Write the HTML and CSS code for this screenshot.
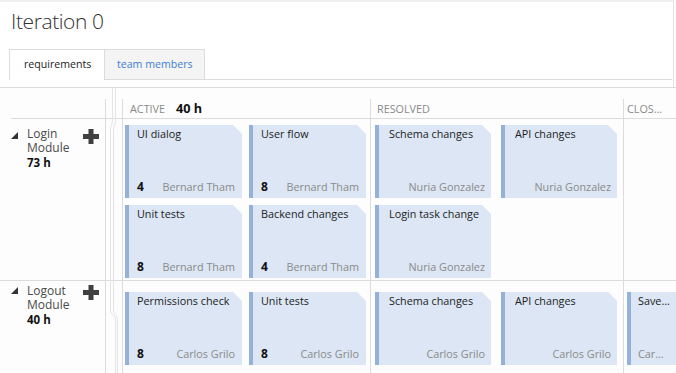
FILE: index.html
```html
<!DOCTYPE html>
<html lang="en">
<head>
<meta charset="utf-8">
<title>Iteration 0</title>
<link rel="stylesheet" href="styles.css">
</head>
<body>
<div class="top">
  <h1 class="title">Iteration 0</h1>
  <div class="tabs">
    <div class="tab tab-active">requirements</div>
    <div class="tab tab-link">team members</div>
    <div class="tab-fill"></div>
  </div>
</div>
<div class="board">
  <div class="hd hd-lane"></div>
  <svg class="splitter" width="18" height="285" viewBox="0 0 18 285">
    <path d="M0.5 11V285M17.5 11V285" stroke="#dcdcdc" fill="none"/>
    <path d="M0 30.5H18M0 192.5H18" stroke="#dcdcdc" fill="none"/>
    <path d="M7.5 0V32C7.5 37 5.5 37 5.5 42V222C5.5 228 10.5 226 10.5 232V285" stroke="#e4e4e4" fill="none"/>
    <path d="M10.5 0V32C10.5 37 8.5 37 8.5 42V222C8.5 228 12.5 226 12.5 232V285" stroke="#e4e4e4" fill="none"/>
  </svg>
  <div class="hd hd-active"><span class="hd-name">Active</span><span class="hd-count">40 h</span></div>
  <div class="hd hd-col hd-resolved"><span class="hd-name">Resolved</span></div>
  <div class="hd hd-col hd-closed"><span class="hd-name">Closed</span></div>

  <div class="lane lane-1">
    <svg class="tri" width="7" height="7" viewBox="0 0 7 7"><polygon points="7,0 7,7 0,7" fill="#333"/></svg>
    <div class="lane-title"><div class="lane-name">Login</div><div class="lane-name">Module</div><div class="lane-hours">73 h</div></div>
    <svg class="plus" width="16" height="15" viewBox="0 0 16 15"><path d="M5.5 0H10.5V5H16V10H10.5V15H5.5V10H0V5H5.5Z" fill="#404040"/></svg>
  </div>
  <div class="cell cell-active row-1">
    <div class="card"><div class="card-title">UI dialog</div><div class="card-foot"><span class="est">4</span><span class="owner">Bernard Tham</span></div></div>
    <div class="card"><div class="card-title">User flow</div><div class="card-foot"><span class="est">8</span><span class="owner">Bernard Tham</span></div></div>
    <div class="card"><div class="card-title">Unit tests</div><div class="card-foot"><span class="est">8</span><span class="owner">Bernard Tham</span></div></div>
    <div class="card"><div class="card-title">Backend changes</div><div class="card-foot"><span class="est">4</span><span class="owner">Bernard Tham</span></div></div>
  </div>
  <div class="cell cell-resolved row-1">
    <div class="card card-narrow"><div class="card-title">Schema changes</div><div class="card-foot"><span class="owner">Nuria Gonzalez</span></div></div>
    <div class="card card-narrow"><div class="card-title">API changes</div><div class="card-foot"><span class="owner">Nuria Gonzalez</span></div></div>
    <div class="card card-narrow"><div class="card-title">Login task change</div><div class="card-foot"><span class="owner">Nuria Gonzalez</span></div></div>
  </div>
  <div class="cell cell-closed row-1"></div>

  <div class="lane lane-2">
    <svg class="tri" width="7" height="7" viewBox="0 0 7 7"><polygon points="7,0 7,7 0,7" fill="#333"/></svg>
    <div class="lane-title"><div class="lane-name">Logout</div><div class="lane-name">Module</div><div class="lane-hours">40 h</div></div>
    <svg class="plus" width="16" height="15" viewBox="0 0 16 15"><path d="M5.5 0H10.5V5H16V10H10.5V15H5.5V10H0V5H5.5Z" fill="#404040"/></svg>
  </div>
  <div class="cell cell-active row-2">
    <div class="card"><div class="card-title">Permissions check</div><div class="card-foot"><span class="est">8</span><span class="owner">Carlos Grilo</span></div></div>
    <div class="card"><div class="card-title">Unit tests</div><div class="card-foot"><span class="est">8</span><span class="owner">Carlos Grilo</span></div></div>
  </div>
  <div class="cell cell-resolved row-2">
    <div class="card card-narrow"><div class="card-title">Schema changes</div><div class="card-foot"><span class="owner">Carlos Grilo</span></div></div>
    <div class="card card-narrow"><div class="card-title">API changes</div><div class="card-foot"><span class="owner">Carlos Grilo</span></div></div>
  </div>
  <div class="cell cell-closed row-2">
    <div class="card card-clipped"><div class="card-title">Save changes</div><div class="card-foot"><span class="owner">Carlos Grilo</span></div></div>
  </div>
</div>
</body>
</html>
```
FILE: styles.css
```css
html, body {
  margin: 0;
  padding: 0;
  overflow: hidden;
}
body {
  width: 676px;
  height: 373px;
  background: #fdfdfd;
  font-family: "Open Sans", "Noto Sans", sans-serif;
  color: #222;
}
.top {
  box-sizing: border-box;
  width: 674px;
  height: 87px;
  border-top: 2px solid #efefef;
  border-right: 1px solid #e2e2e2;
  background: #fff;
  padding: 5px 1px 0 9px;
}
.title {
  margin: 0 0 14px 2px;
  font-size: 21px;
  font-weight: 300;
  line-height: 28px;
  letter-spacing: -0.4px;
  color: #333;
}
.tabs {
  display: flex;
  height: 31px;
}
.tab {
  box-sizing: border-box;
  height: 31px;
  font-size: 10.6px;
  line-height: 14px;
  padding-top: 7px;
  border-top: 1px solid #dcdcdc;
}
.tab-active {
  width: 96px;
  padding-left: 14px;
  border-left: 1px solid #dcdcdc;
  border-right: 1px solid #dcdcdc;
  color: #222;
  background: #fff;
}
.tab-link {
  width: 100px;
  padding-left: 12px;
  border-right: 1px solid #dcdcdc;
  border-bottom: 1px solid #dcdcdc;
  background: #f4f4f4;
  color: #3d7fd6;
}
.tab-fill {
  flex: 1;
  border-bottom: 1px solid #dcdcdc;
}
.board {
  box-sizing: border-box;
  height: 286px;
  border-top: 1px solid #dcdcdc;
  display: grid;
  grid-template-columns: 105px 18px 247px 253px 53px;
  grid-template-rows: 31px 162px 1fr;
  overflow: hidden;
}
.splitter {
  grid-column: 2;
  grid-row: 1 / 4;
  display: block;
}
.hd {
  box-sizing: border-box;
  margin-top: 11px;
  height: 20px;
  border-bottom: 1px solid #dcdcdc;
  display: flex;
  align-items: baseline;
  line-height: 19px;
  white-space: nowrap;
  min-width: 0;
}
.hd-lane {
  margin-left: 11px;
}
.hd-col {
  border-left: 1px solid #dcdcdc;
}
.hd-name {
  font-size: 10.8px;
  text-transform: uppercase;
  color: #8a8a8a;
  overflow: hidden;
  text-overflow: ellipsis;
}
.hd-active {
  padding-left: 7px;
}
.hd-resolved {
  padding-left: 6px;
}
.hd-closed {
  padding-left: 3px;
  padding-right: 13px;
}
.hd-count {
  margin-left: 11px;
  font-size: 12.7px;
  font-weight: 700;
  color: #111;
}
.lane {
  display: flex;
  align-items: flex-start;
  padding-left: 11px;
}
.lane-1 {
  padding-top: 8px;
  border-bottom: 1px solid #dcdcdc;
}
.lane-2 {
  padding-top: 3px;
}
.tri {
  display: block;
  margin-top: 5px;
  margin-right: 9px;
  flex-shrink: 0;
}
.lane-2 .tri {
  margin-top: 3px;
}
.lane-title {
  width: 56px;
  flex-shrink: 0;
}
.lane-name {
  font-size: 12px;
  line-height: 14px;
  color: #4a4a4a;
}
.lane-hours {
  font-size: 11.5px;
  line-height: 15px;
  font-weight: 700;
  color: #111;
}
.plus {
  display: block;
  margin-top: 2px;
}
.lane-2 .plus {
  margin-top: 1px;
}
.cell {
  display: flex;
  flex-wrap: wrap;
  align-content: flex-start;
  min-width: 0;
}
.row-1 {
  padding-top: 6px;
  border-bottom: 1px solid #dcdcdc;
}
.row-2 {
  padding-top: 11px;
}
.cell-active {
  padding-left: 2px;
  gap: 7px 7px;
}
.cell-resolved {
  border-left: 1px solid #dcdcdc;
  padding-left: 4px;
  gap: 7px 10px;
}
.cell-closed {
  border-left: 1px solid #dcdcdc;
  padding-left: 3px;
}
.card {
  box-sizing: border-box;
  width: 117px;
  height: 73px;
  flex-shrink: 0;
  background: #dce6f4;
  border-left: 4px solid #94b2d7;
  clip-path: polygon(0 0, calc(100% - 9px) 0, 100% 9px, 100% 100%, 0 100%);
  padding: 2px 7px 4px 8px;
  display: flex;
  flex-direction: column;
  justify-content: space-between;
  font-size: 10.8px;
  line-height: 14px;
}
.card-narrow {
  width: 116px;
  padding-right: 6px;
  padding-left: 10px;
}
.card-clipped {
  width: 57px;
  padding-left: 7px;
  padding-right: 12px;
  clip-path: none;
}
.card-title {
  color: #222;
  white-space: nowrap;
  overflow: hidden;
  text-overflow: ellipsis;
}
.card-foot {
  display: flex;
  align-items: baseline;
  min-width: 0;
}
.est {
  font-size: 12px;
  font-weight: 700;
  color: #111;
}
.owner {
  margin-left: auto;
  min-width: 0;
  color: #8a8a8a;
  white-space: nowrap;
  overflow: hidden;
  text-overflow: ellipsis;
}
.card-clipped .owner {
  margin-left: 0;
  max-width: 27px;
}
```
